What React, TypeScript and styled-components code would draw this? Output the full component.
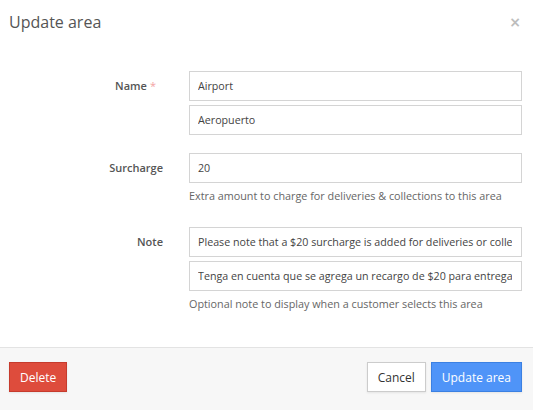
import React from "react";
import styled, { createGlobalStyle } from "styled-components";

const GlobalStyle = createGlobalStyle`
  html, body {
    margin: 0;
    padding: 0;
    background: #ffffff;
  }
  body {
    font-family: "Open Sans", "Liberation Sans", Arial, sans-serif;
    color: #444;
  }
  * {
    box-sizing: border-box;
  }
`;

const Modal = styled.div`
  display: flex;
  flex-direction: column;
  height: 100vh;
  background: #fff;
`;

const Header = styled.div`
  display: flex;
  align-items: center;
  justify-content: space-between;
  padding: 10px 12px 10px 9px;
`;

const Title = styled.h4`
  margin: 0;
  font-size: 16px;
  line-height: 24px;
  font-weight: 400;
  color: #555;
`;

const CloseBtn = styled.button`
  border: none;
  background: none;
  padding: 0;
  color: #bdbdbd;
  font-family: "DejaVu Sans", sans-serif;
  font-size: 14px;
  font-weight: 700;
  line-height: 18px;
  cursor: pointer;
`;

const Body = styled.div`
  flex: 1;
  padding: 27px 11px 0 0;
`;

const Group = styled.div`
  display: grid;
  grid-template-columns: 163px 1fr;
  column-gap: 26px;
  margin-bottom: 18px;
`;

const Label = styled.label`
  text-align: right;
  font-size: 11px;
  font-weight: 600;
  line-height: 30px;
  color: #555;
`;

const Required = styled.span`
  color: #f3a3a3;
  margin-left: 3px;
  margin-right: 7px;
  font-weight: 400;
`;

const Controls = styled.div`
  display: flex;
  flex-direction: column;
  gap: 4px;
`;

const Input = styled.input`
  width: 100%;
  height: 30px;
  padding: 0 9px 0 8px;
  border: 1px solid #d4d4d4;
  border-radius: 0;
  background: #fff;
  font-family: "Open Sans", "Liberation Sans", Arial, sans-serif;
  font-size: 10.7px;
  color: #444;
  outline: none;
`;

const Help = styled.div`
  margin: 0 0 4px;
  font-size: 10.8px;
  line-height: 18px;
  color: #666;
`;

const Footer = styled.div`
  display: flex;
  align-items: center;
  gap: 5px;
  padding: 14px 11px 18px 9px;
  background: #f7f7f7;
  border-top: 1px solid #e3e3e3;
`;

const Spacer = styled.div`
  flex: 1;
`;

const Button = styled.button<{ $variant?: "danger" | "primary" }>`
  height: 30px;
  padding: 0 10px;
  font-family: "Open Sans", "Liberation Sans", Arial, sans-serif;
  font-size: 12px;
  border-radius: 0;
  cursor: pointer;
  box-shadow: 0 1px 2px rgba(0, 0, 0, 0.08);
  background: ${(p) =>
    p.$variant === "danger" ? "#de4c3c" : p.$variant === "primary" ? "#4f94f8" : "#ffffff"};
  border: 1px solid
    ${(p) =>
      p.$variant === "danger" ? "#c63b2d" : p.$variant === "primary" ? "#3b80e2" : "#cccccc"};
  color: ${(p) => (p.$variant ? "#ffffff" : "#333333")};
`;

export default function App() {
  return (
    <Modal>
      <GlobalStyle />
      <Header>
        <Title>Update area</Title>
        <CloseBtn aria-label="Close">×</CloseBtn>
      </Header>
      <Body>
        <Group>
          <Label>
            Name<Required>*</Required>
          </Label>
          <Controls>
            <Input defaultValue="Airport" />
            <Input defaultValue="Aeropuerto" />
          </Controls>
        </Group>
        <Group>
          <Label>Surcharge</Label>
          <Controls>
            <Input defaultValue="20" />
            <Help>Extra amount to charge for deliveries &amp; collections to this area</Help>
          </Controls>
        </Group>
        <Group>
          <Label>Note</Label>
          <Controls>
            <Input defaultValue="Please note that a $20 surcharge is added for deliveries or collections to this area" />
            <Input defaultValue="Tenga en cuenta que se agrega un recargo de $20 para entregas o recogidas en esta zona" />
            <Help>Optional note to display when a customer selects this area</Help>
          </Controls>
        </Group>
      </Body>
      <Footer>
        <Button $variant="danger">Delete</Button>
        <Spacer />
        <Button>Cancel</Button>
        <Button $variant="primary">Update area</Button>
      </Footer>
    </Modal>
  );
}
